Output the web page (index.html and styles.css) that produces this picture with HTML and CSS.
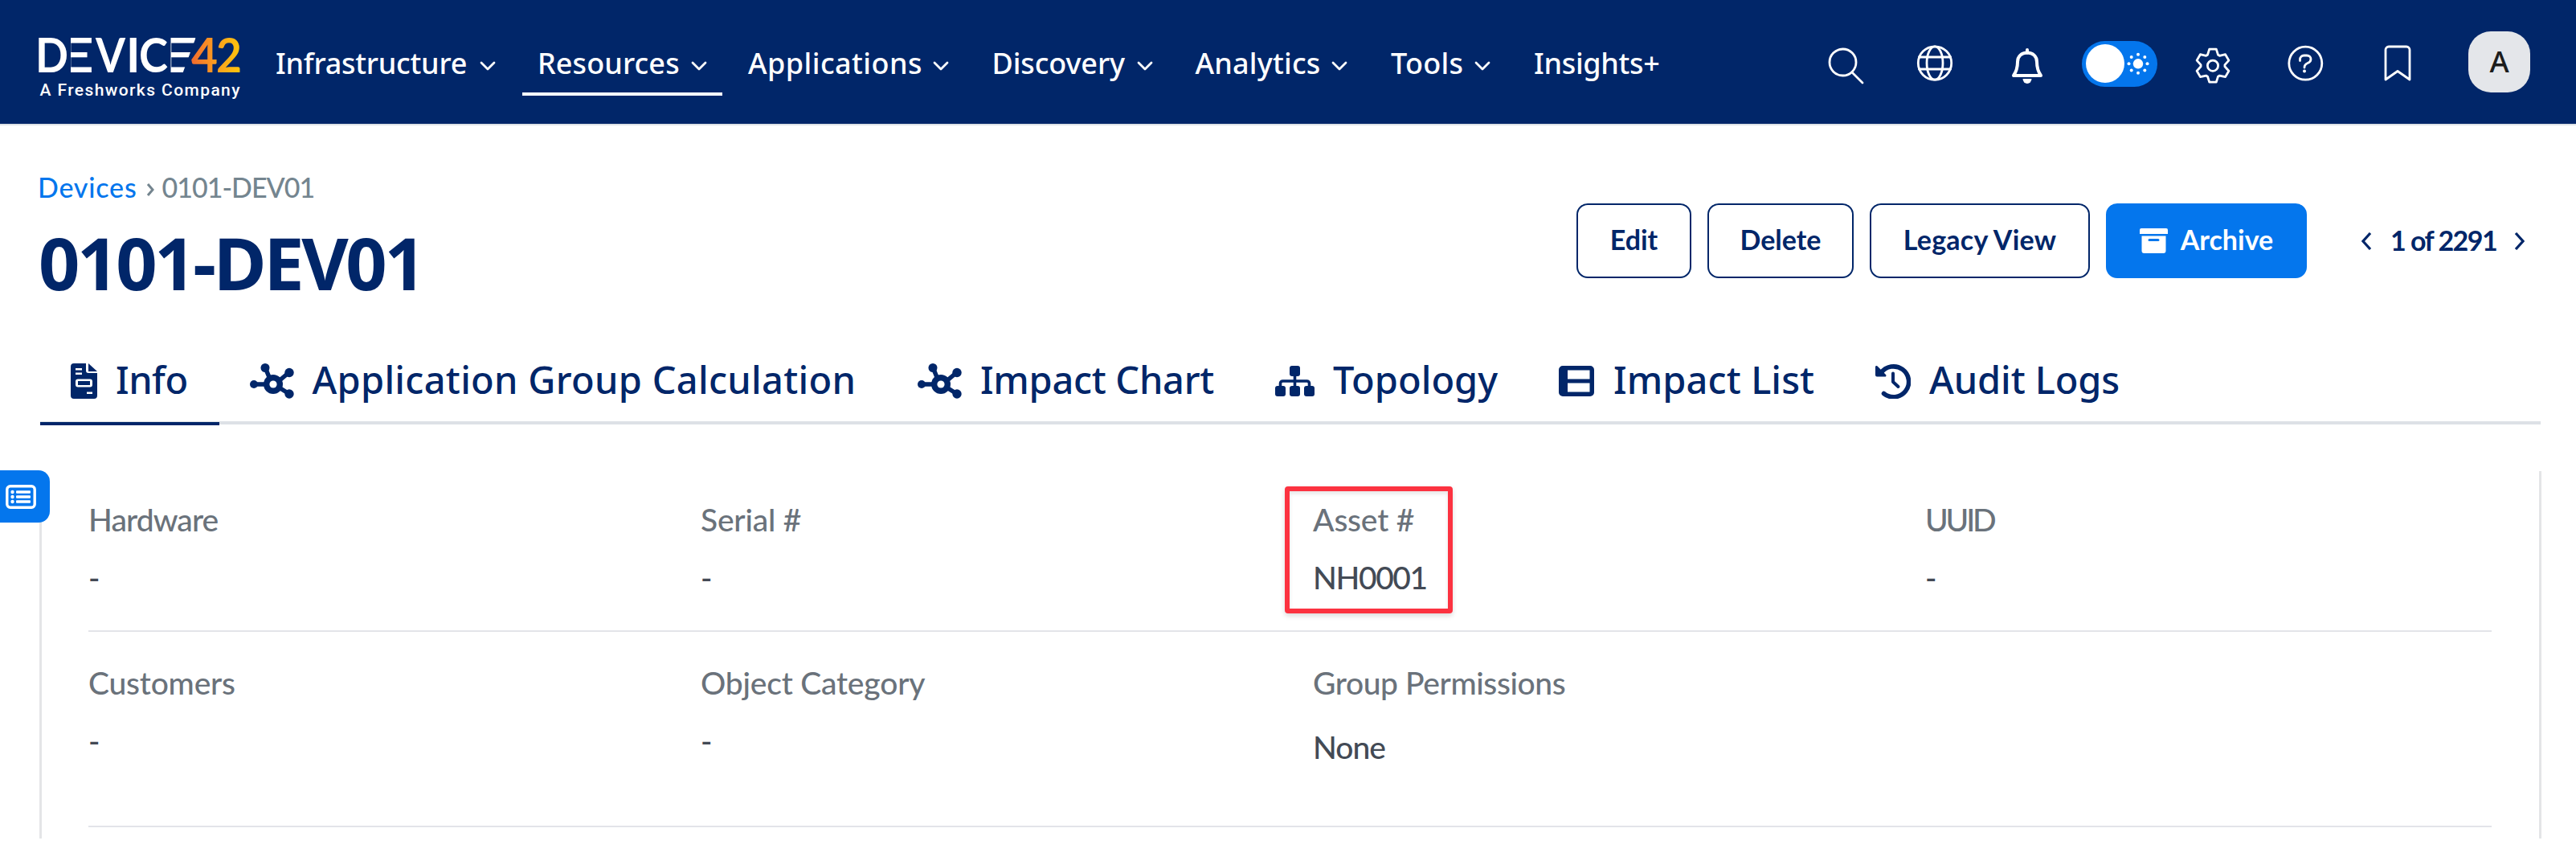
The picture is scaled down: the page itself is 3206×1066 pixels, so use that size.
FILE: index.html
```html
<!DOCTYPE html>
<html lang="en">
<head>
<meta charset="utf-8">
<title>0101-DEV01 | Device42</title>
<link rel="stylesheet" href="styles.css">
</head>
<body>
<header class="topbar">
  <a class="brand">
    <svg class="brand-logo" viewBox="40 25 270 120" width="270" height="120">
      <defs>
        <linearGradient id="warm" gradientUnits="userSpaceOnUse" x1="238" y1="0" x2="300" y2="0">
          <stop offset="0" stop-color="#f26a2e"/>
          <stop offset="0.5" stop-color="#fa9f1f"/>
          <stop offset="1" stop-color="#ffc60b"/>
        </linearGradient>
      </defs>
      <g class="logo-word">
        <text x="71" y="90" textLength="46" lengthAdjust="spacingAndGlyphs">E</text>
        <rect class="logo-cut" x="75" y="46" width="13" height="46"/>
        <text x="193" y="90" textLength="54" lengthAdjust="spacingAndGlyphs">E</text>
        <path class="logo-cut" d="M199 46H212.500V92H199zM244 46L227 92H256V46z"/>
        <text x="44" y="90" textLength="41" lengthAdjust="spacingAndGlyphs">D</text>
        <text x="119" y="90" textLength="37" lengthAdjust="spacingAndGlyphs">V</text>
        <text x="157" y="90">I</text>
        <text x="173" y="90" textLength="36" lengthAdjust="spacingAndGlyphs">C</text>
        <text class="logo-warm" x="238" y="90" textLength="33" lengthAdjust="spacingAndGlyphs">4</text>
        <text class="logo-warm" x="269" y="90" textLength="32" lengthAdjust="spacingAndGlyphs">2</text>
      </g>
      <text class="logo-tag" x="49.500" y="118.500" textLength="249">A Freshworks Company</text>
    </svg>
  </a>
  <nav class="nav">
    <a class="nav-item infra"><span>Infrastructure</span><svg class="chev" viewBox="0 0 20 12"><path d="M2 2l8 8 8-8"/></svg></a>
    <a class="nav-item res active"><span>Resources</span><svg class="chev" viewBox="0 0 20 12"><path d="M2 2l8 8 8-8"/></svg></a>
    <a class="nav-item apps"><span>Applications</span><svg class="chev" viewBox="0 0 20 12"><path d="M2 2l8 8 8-8"/></svg></a>
    <a class="nav-item disc"><span>Discovery</span><svg class="chev" viewBox="0 0 20 12"><path d="M2 2l8 8 8-8"/></svg></a>
    <a class="nav-item anal"><span>Analytics</span><svg class="chev" viewBox="0 0 20 12"><path d="M2 2l8 8 8-8"/></svg></a>
    <a class="nav-item tools"><span>Tools</span><svg class="chev" viewBox="0 0 20 12"><path d="M2 2l8 8 8-8"/></svg></a>
    <a class="nav-item insights"><span>Insights+</span></a>
  </nav>
  <div class="utils">
    <svg class="util search" viewBox="2267 49 60 60"><circle cx="2293.500" cy="77.500" r="16.500"/><path d="M2305 90l13 13"/></svg>
    <svg class="util" viewBox="2377.500 49 60 60"><g><circle cx="2407.500" cy="78.500" r="20.700"/><ellipse cx="2407.500" cy="78.500" rx="10" ry="20.700"/><path d="M2388 71h39M2388 86h39"/></g></svg>
    <svg class="util" viewBox="2493 49 60 60"><path class="w4" d="M2523 62v4M2506 94h34c-3.500-5-5-10-5-17 0-7-5-11.500-12-11.500S2511 70 2511 77c0 7-1.500 12-5 17z"/><path class="solid" d="M2517.500 98h11a5.500 6 0 0 1-11 0z"/></svg>
    <svg class="toggle" viewBox="2591 51 94 57">
      <rect x="2591" y="51" width="94" height="57" rx="28.500" fill="#0476ed"/>
      <g fill="#fff"><circle cx="2620" cy="79" r="24"/><circle cx="2661" cy="79.300" r="6.200"/><circle cx="2661" cy="67.800" r="2"/><circle cx="2661" cy="90.800" r="2"/><circle cx="2649.500" cy="79.300" r="2"/><circle cx="2672.500" cy="79.300" r="2"/><circle cx="2652.700" cy="71" r="2"/><circle cx="2669.300" cy="71" r="2"/><circle cx="2652.700" cy="87.600" r="2"/><circle cx="2669.300" cy="87.600" r="2"/></g>
    </svg>
    <svg class="util" viewBox="-30 -32.700 60 60"><circle r="6.600"/><path d="M-6.500-13.500L-4.300-20.500H4.300L6.500-13.500 8.440-12.380 15.600-13.970 19.900-6.530 14.940-1.120V1.120L19.900 6.530 15.600 13.970 8.440 12.380 6.500 13.500 4.300 20.500H-4.300L-6.500 13.500-8.440 12.380-15.600 13.970-19.900 6.530-14.940 1.120V-1.120L-19.900-6.530-15.600-13.970-8.440-12.380z"/></svg>
    <svg class="util" viewBox="2838 49 60 60"><circle cx="2868.300" cy="78.700" r="20.500"/><path d="M2861.500 75.500v-1.500c0-3 2-5 5-5h3.500c3 0 5 2 5 4.500 0 2.500-1.500 4-4 5s-4 2.500-4 5.500"/><circle class="solid" cx="2867" cy="88.500" r="2"/></svg>
    <svg class="util" viewBox="2953.500 49 60 60"><path d="M2968.500 99V62a4 4 0 0 1 4-4h22a4 4 0 0 1 4 4v37l-15-10.500z"/></svg>
    <div class="avatar">A</div>
  </div>
</header>

<main>
  <section class="page-head">
    <div class="heading">
      <div class="crumbs"><a>Devices</a><svg viewBox="0 0 10 16"><path d="M2 1l6 7-6 7"/></svg><span>0101-DEV01</span></div>
      <h1>0101-DEV01</h1>
    </div>
    <div class="actions">
      <button class="btn edit">Edit</button>
      <button class="btn delete">Delete</button>
      <button class="btn legacy">Legacy View</button>
      <button class="btn primary"><svg viewBox="0 0 35 31"><path d="M2 0h31a2 2 0 0 1 2 2v5H0V2a2 2 0 0 1 2-2zM2.500 9.500h30V28a3 3 0 0 1-3 3h-24a3 3 0 0 1-3-3zM12 13a1.500 1.500 0 0 0 0 3h11a1.500 1.500 0 0 0 0-3z" fill-rule="evenodd"/></svg><span>Archive</span></button>
      <div class="pager"><svg viewBox="0 0 13 22"><path d="M11 1l-9 10 9 10"/></svg><span>1 of 2291</span><svg viewBox="0 0 13 22"><path d="M2 1l9 10-9 10"/></svg></div>
    </div>
  </section>

  <nav class="tabs">
    <a class="tab info active"><svg width="33" height="44" viewBox="0 0 33 44"><path fill-rule="evenodd" d="M4 0H19V9a3 3 0 0 0 3 3H33V40a4 4 0 0 1-4 4H4a4 4 0 0 1-4-4V4a4 4 0 0 1 4-4zM22 0L33 10H22zM6 6v2.500h8V6zM6 11.500V14h8v-2.500zM9 19.500a3 3 0 0 0-3 3v4a3 3 0 0 0 3 3h15a3 3 0 0 0 3-3v-4a3 3 0 0 0-3-3zM9 22h15v5H9zM20 35.500V38h7v-2.500z"/></svg><span>Info</span></a>
    <a class="tab group"><svg width="55" height="44" viewBox="0 0 55 44"><path class="spoke" d="M19 5l7 17M49 11L30 27M5 26h24M49 38L30 26"/><circle cx="19" cy="5.500" r="5.500"/><circle cx="49" cy="11.500" r="5.700"/><circle cx="5" cy="26" r="5"/><circle cx="49" cy="38" r="5.700"/><circle cx="29" cy="26" r="12"/><circle cx="29" cy="26" r="4.600" fill="#fff"/></svg><span>Application Group Calculation</span></a>
    <a class="tab chart"><svg width="55" height="44" viewBox="0 0 55 44"><path class="spoke" d="M19 5l7 17M49 11L30 27M5 26h24M49 38L30 26"/><circle cx="19" cy="5.500" r="5.500"/><circle cx="49" cy="11.500" r="5.700"/><circle cx="5" cy="26" r="5"/><circle cx="49" cy="38" r="5.700"/><circle cx="29" cy="26" r="12"/><circle cx="29" cy="26" r="4.600" fill="#fff"/></svg><span>Impact Chart</span></a>
    <a class="tab topo"><svg width="49" height="44" viewBox="0 0 49 44"><rect x="18" y="3" width="13" height="13" rx="3"/><rect x="0" y="28" width="13" height="13" rx="3"/><rect x="18" y="28" width="13" height="13" rx="3"/><rect x="36" y="28" width="13" height="13" rx="3"/><path class="wire" d="M24.500 14v16M6.500 29v-4a3 3 0 0 1 3-3h30a3 3 0 0 1 3 3v4"/></svg><span>Topology</span></a>
    <a class="tab list"><svg width="44" height="44" viewBox="0 0 44 44"><path fill-rule="evenodd" d="M5 3H39a5 5 0 0 1 5 5V36a5 5 0 0 1-5 5H5a5 5 0 0 1-5-5V8a5 5 0 0 1 5-5zM11 8.500V19.500H38.500V8.500zM11 24.500V35.500H38.500V24.500z"/></svg><span>Impact List</span></a>
    <a class="tab audit"><svg width="44" height="44" viewBox="0 0 44 44"><path class="arc" d="M7 12A19 19 0 1 1 10.500 37.500"/><path class="hand" d="M22 12.500V23l6.500 6"/><path d="M0 4.500a1.500 1.500 0 0 1 2.600-1L13 14a1.500 1.500 0 0 1-1 2.600H2a2 2 0 0 1-2-2z"/></svg><span>Audit Logs</span></a>
  </nav>

  <section class="panel">
    <div class="fields row-one">
      <div class="field"><div class="label hardware">Hardware</div><div class="value">-</div></div>
      <div class="field"><div class="label">Serial #</div><div class="value">-</div></div>
      <div class="field highlighted"><div class="label">Asset #</div><div class="value asset">NH0001</div></div>
      <div class="field"><div class="label uuid">UUID</div><div class="value">-</div></div>
    </div>
    <div class="fields row-two">
      <div class="field"><div class="label">Customers</div><div class="value">-</div></div>
      <div class="field"><div class="label">Object Category</div><div class="value">-</div></div>
      <div class="field"><div class="label perms">Group Permissions</div><div class="value none">None</div></div>
    </div>
  </section>
</main>

<button class="drawer"><svg viewBox="0 0 38 30" width="38" height="30"><rect x="1.800" y="1.800" width="34.400" height="26.400" rx="4" fill="none" stroke="#fff" stroke-width="3.400"/><g fill="#fff"><circle cx="8.500" cy="9" r="2.200"/><circle cx="8.500" cy="15" r="2.200"/><circle cx="8.500" cy="21" r="2.200"/><rect x="13" y="7.200" width="18" height="3.600" rx="1"/><rect x="13" y="13.200" width="18" height="3.600" rx="1"/><rect x="13" y="19.200" width="18" height="3.600" rx="1"/></g></svg></button>
</body>
</html>
```
FILE: styles.css
```css
*, *::after { box-sizing: border-box; }

body {
  margin: 0;
  height: 1066px;
  position: relative;
  overflow: hidden;
  background: #fff;
  color: #012669;
  font-family: Lato, sans-serif;
}

svg { display: block; flex: none; }
button { font: inherit; color: inherit; }

/* Top bar */
.topbar {
  display: flex;
  align-items: center;
  height: 156px;
  padding: 0 57px 0 40px;
  background: #012669;
  border-bottom: 2px solid #dde1e6;
}

.brand { margin-top: 16px; width: 270px; }
.logo-word { font: 700 59px Lato, sans-serif; fill: #fff; }
.logo-word .logo-cut { fill: #012669; }
.logo-word .logo-warm { fill: url(#warm); }
.logo-tag { font: 500 21px Roboto, sans-serif; fill: #fff; }

.nav {
  display: flex;
  gap: 14px;
  margin-left: 13px;
}

.nav-item {
  display: flex;
  align-items: center;
  height: 77px;
  padding: 1px 19px 0 18.5px;
  border-bottom: 4px solid transparent;
  margin-top: 7px;
  color: #fff;
  font: 500 36px/60px "Noto Sans", sans-serif;
  white-space: nowrap;
}
.nav-item.active { border-color: #fff; }
.chev { width: 20px; height: 12px; margin-top: 6px; fill: none; stroke: #fff; stroke-width: 2.8; stroke-linecap: round; stroke-linejoin: round; }
.infra span { width: 255px; text-indent: 1.5px; letter-spacing: -0.25px; }
.res span { width: 191.5px; text-indent: 1px; letter-spacing: 0.1px; }
.apps span { width: 230px; letter-spacing: 0.45px; }
.disc span { width: 182.5px; text-indent: 2px; letter-spacing: -0.1px; }
.anal span { width: 170px; text-indent: 1px; letter-spacing: 0.2px; }
.tools span { width: 106.5px; text-indent: 3px; letter-spacing: 0.3px; }
.insights span { text-indent: 3px; letter-spacing: -0.3px; }

.utils {
  display: flex;
  align-items: center;
  gap: 55px;
  margin-left: auto;
}
.util { width: 60px; height: 60px; margin-top: 4px; fill: none; stroke: #fff; stroke-width: 2.8; stroke-linejoin: round; stroke-linecap: round; }
.util.search { margin-right: -4px; }
.util .w4 { stroke-width: 4; }
.util .solid { fill: #fff; stroke: none; }
.toggle { width: 94px; height: 57px; margin: 5px -16px 0 -17px; }
.avatar {
  width: 77px;
  height: 76px;
  margin-left: 3px;
  border-radius: 28px;
  background: #e4e6ea;
  color: #1c1c1c;
  text-align: center;
  font: 500 37px/74px "Noto Sans", sans-serif;
}

/* Page heading */
.page-head {
  display: flex;
  justify-content: space-between;
  height: 266px;
  padding: 57px 64px 0 47px;
}
.crumbs {
  display: flex;
  align-items: center;
  font-size: 34px;
  font-weight: 500;
  line-height: 40px;
  letter-spacing: -1px;
  color: #74858f;
}
.crumbs a { color: #0476ed; letter-spacing: 0.8px; }
.crumbs svg { width: 10px; height: 16px; margin: 6px 10px 0 11px; fill: none; stroke: #74858f; stroke-width: 3; }
h1 {
  margin: 23px 0 0 1px;
  font: 700 90px/100px "Noto Sans", sans-serif;
  letter-spacing: -3.4px;
}

.actions {
  display: flex;
  align-items: center;
  gap: 20px;
  height: 93px;
  margin-top: 40px;
}
.btn {
  height: 93px;
  padding: 0 0 4px;
  border: 2.5px solid #012669;
  border-radius: 14px;
  background: #fff;
  font-size: 34px;
  font-weight: 700;
  text-align: center;
}
.edit { width: 143px; }
.delete { width: 182px; }
.legacy { width: 274px; letter-spacing: 0.2px; }
.primary {
  display: flex;
  align-items: center;
  justify-content: center;
  gap: 16px;
  width: 250px;
  border-color: #0476ed;
  background: #0476ed;
  color: #fff;
}
.primary svg { width: 35px; height: 31px; margin-top: 3px; fill: #fff; }
.pager {
  display: flex;
  align-items: center;
  margin-left: 48px;
  font-size: 34px;
  font-weight: 700;
  letter-spacing: -1.5px;
}
.pager span { width: 135px; margin: -2px 19px 0 23px; white-space: nowrap; }
.pager svg { width: 13px; height: 22px; fill: none; stroke: #012669; stroke-width: 3.2; }

/* Tabs */
.tabs {
  display: flex;
  height: 106px;
  margin: 0 44px 0 50px;
  border-bottom: 4px solid #dde1e6;
}
.tab {
  display: flex;
  align-items: center;
  gap: 23px;
  height: 107px;
  padding: 0 38px;
  border-bottom: 4px solid transparent;
  font: 500 47px/64px "Noto Sans", sans-serif;
  white-space: nowrap;
}
.tab.active { border-color: #012669; }
.tab svg { fill: #012669; }
.tab span { margin-top: -3px; }
.info span { width: 90.5px; letter-spacing: -0.5px; }
.group span { width: 677.5px; letter-spacing: 0.28px; }
.chart span { width: 291px; letter-spacing: -0.3px; }
.topo span { width: 205px; }
.list span { width: 251px; text-indent: 1px; letter-spacing: 0.1px; }
.audit span { letter-spacing: -0.1px; }
.spoke { stroke: #012669; stroke-width: 5.5; fill: none; }
.wire { stroke: #012669; stroke-width: 3.6; fill: none; }
.arc { stroke: #012669; stroke-width: 5.6; stroke-linecap: round; fill: none; }
.hand { stroke: #012669; stroke-width: 4; stroke-linecap: round; stroke-linejoin: round; fill: none; }

/* Details panel */
.panel {
  height: 457px;
  margin: 58px 43px 0 49px;
  padding: 0 59px 0 58px;
  border: solid #e4e5e7;
  border-width: 0 3px;
}
.fields {
  display: grid;
  grid-template-columns: repeat(4, 705px);
  column-gap: 57px;
  border-bottom: 2px solid #e3e4e9;
}
.row-one { height: 200px; padding-top: 40px; }
.row-two { height: 243px; padding-top: 43px; }
.field { position: relative; font-size: 39px; font-weight: 500; line-height: 40px; }
.label { color: #6a727b; letter-spacing: -0.2px; }
.hardware { letter-spacing: -0.9px; }
.uuid { letter-spacing: -3.2px; }
.perms { letter-spacing: -0.4px; }
.value { margin-top: 32px; color: #434a55; }
.asset { letter-spacing: -1.4px; }
.none { margin-top: 40px; letter-spacing: -1px; }

.highlighted::after {
  content: "";
  position: absolute;
  left: -35px;
  top: -21px;
  width: 209px;
  height: 158px;
  border: 6px solid #fc3240;
  border-radius: 4px;
  box-shadow: 0 3px 6px rgba(0, 0, 0, 0.15), inset 0 3px 5px rgba(0, 0, 0, 0.1);
}

/* Drawer handle pinned over the page's left edge */
.drawer {
  position: absolute;
  left: 0;
  top: 585px;
  display: flex;
  align-items: center;
  width: 62px;
  height: 65px;
  padding: 0 0 0 7px;
  border: 0;
  border-radius: 0 14px 14px 0;
  background: #0476ed;
}
```
